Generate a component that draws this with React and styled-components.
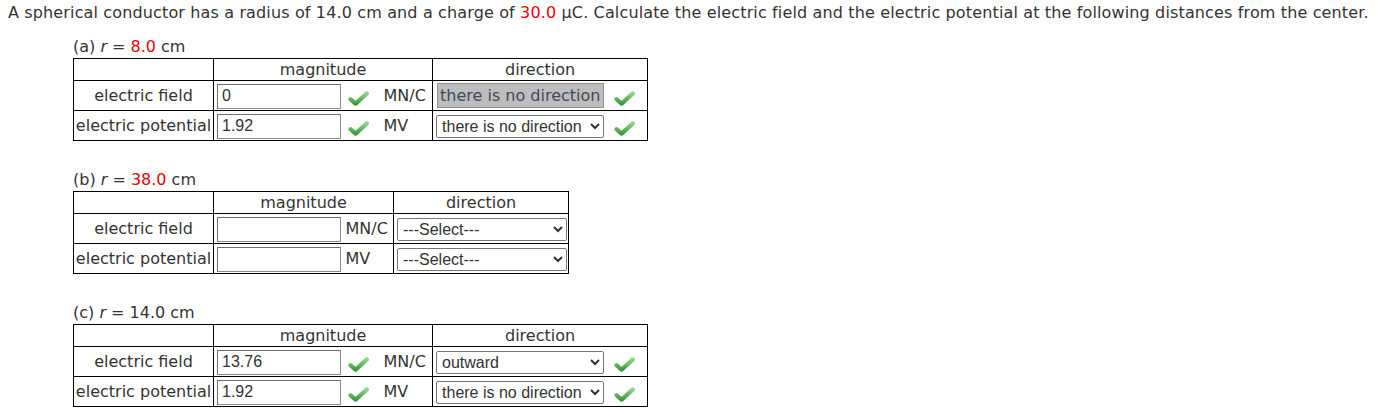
import React from 'react';
import styled, { createGlobalStyle } from 'styled-components';

const GlobalStyle = createGlobalStyle`
  html, body {
    margin: 0;
    padding: 0;
    background: #fff;
  }
  body {
    font-family: "DejaVu Sans", Verdana, sans-serif;
    font-size: 16px;
    color: #333;
  }
`;

const Page = styled.div`
  padding: 3px 8px 0 8px;
`;

const Intro = styled.p`
  margin: 0;
  line-height: 20px;
  white-space: nowrap;
  letter-spacing: 0.14px;
`;

const Red = styled.span`
  color: #e00;
`;

const Section = styled.section`
  margin: ${p => (p.$first ? '14px' : '29px')} 0 0 65px;
`;

const PartLabel = styled.div`
  line-height: 20px;
  height: 20px;
  margin-bottom: 1px;
`;

const Var = styled.i`
  font-style: italic;
`;

const Grid = styled.table`
  border-collapse: collapse;
  table-layout: fixed;
  width: ${p => p.$width}px;
  border: 1px solid #000;
`;

const Cell = styled.td`
  padding: 0;
  border-top: 1px solid #000;
  border-bottom: 1px solid #000;
  border-left: ${p => (p.$edge ? '1px solid #000' : 'none')};
  text-align: ${p => p.$align || 'left'};
  vertical-align: middle;
  white-space: nowrap;
  height: ${p => (p.$head ? 21 : 29)}px;
  line-height: 18px;
`;

const HeadRow = styled.tr`
  height: 22px;
`;

const BodyRow = styled.tr`
  height: 30px;
`;

const FieldInput = styled.input`
  box-sizing: border-box;
  width: 124px;
  height: 25px;
  margin: 1px 0 0 3px;
  padding: 0 4px;
  border: 1px solid #8a8a8a;
  border-left-color: #6f6f6f;
  border-top-color: #6f6f6f;
  font-family: "Liberation Sans", Arial, sans-serif;
  font-size: 16px;
  color: #333;
  background: #fff;
  display: block;
`;

const Unit = styled.span`
  display: block;
  padding-left: 3px;
`;

const Picker = styled.select`
  box-sizing: border-box;
  width: ${p => p.$width}px;
  height: 23px;
  margin: 1px 0 0 3px;
  font-family: "Liberation Sans", Arial, sans-serif;
  font-size: 16px;
  color: #333;
  border: 1px solid #767676;
  border-radius: 2px;
  background: #fff;
  display: block;
  padding: 0 1px;
`;

const Locked = styled.span`
  box-sizing: border-box;
  display: block;
  width: 167px;
  height: 25px;
  margin: 0 0 0 4px;
  padding: 0 2px;
  line-height: 23px;
  background: #bdbdbd;
  border: 1px solid #8f8f8f;
  color: #3d4a5c;
  white-space: nowrap;
  overflow: hidden;
`;

const CheckWrap = styled.span`
  display: flex;
  justify-content: center;
  padding: 5px 4px 0 0;
`;

const Check = () => (
  <CheckWrap>
    <svg width="21" height="15" viewBox="0 0 21 15">
      <defs>
        <linearGradient id="chk" x1="0" y1="0" x2="0" y2="1">
          <stop offset="0" stopColor="#8fd48f" />
          <stop offset="1" stopColor="#3c9a3c" />
        </linearGradient>
      </defs>
      <path
        d="M2.5 8.2 L7.6 12.6 L18.8 2.4"
        fill="none"
        stroke="url(#chk)"
        strokeWidth="4.2"
        strokeLinecap="round"
        strokeLinejoin="round"
      />
    </svg>
  </CheckWrap>
);

const options = ['---Select---', 'outward', 'inward', 'there is no direction'];

const Row = ({ label, value, unit, dir, checked, locked }) => (
  <BodyRow>
    <Cell $align="center">{label}</Cell>
    <Cell $edge>
      <FieldInput defaultValue={value} />
    </Cell>
    {checked && <Cell>{<Check />}</Cell>}
    <Cell>
      <Unit>{unit}</Unit>
    </Cell>
    <Cell $edge>
      {locked ? (
        <Locked>{dir}</Locked>
      ) : (
        <Picker $width={checked ? 168 : 170} defaultValue={dir}>
          {options.map(o => (
            <option key={o}>{o}</option>
          ))}
        </Picker>
      )}
    </Cell>
    {checked && (
      <Cell>
        <Check />
      </Cell>
    )}
  </BodyRow>
);

const PartTable = ({ checked, rows }) => (
  <Grid $width={checked ? 574 : 495}>
    <colgroup>
      {checked
        ? [140, 127, 40, 52, 173, 42].map((w, i) => <col key={i} style={{ width: w }} />)
        : [140, 129, 51, 175].map((w, i) => <col key={i} style={{ width: w }} />)}
    </colgroup>
    <tbody>
      <HeadRow>
        <Cell $head />
        <Cell $head $edge $align="center" colSpan={checked ? 3 : 2}>
          magnitude
        </Cell>
        <Cell $head $edge $align="center" colSpan={checked ? 2 : 1}>
          direction
        </Cell>
      </HeadRow>
      {rows.map(r => (
        <Row key={r.label} checked={checked} {...r} />
      ))}
    </tbody>
  </Grid>
);

export default function App() {
  return (
    <Page>
      <GlobalStyle />
      <Intro>
        A spherical conductor has a radius of 14.0 cm and a charge of <Red>30.0</Red> μC. Calculate the
        electric field and the electric potential at the following distances from the center.
      </Intro>

      <Section $first>
        <PartLabel>
          (a) <Var>r</Var> = <Red>8.0</Red> cm
        </PartLabel>
        <PartTable
          checked
          rows={[
            { label: 'electric field', value: '0', unit: 'MN/C', dir: 'there is no direction', locked: true },
            { label: 'electric potential', value: '1.92', unit: 'MV', dir: 'there is no direction' },
          ]}
        />
      </Section>

      <Section>
        <PartLabel>
          (b) <Var>r</Var> = <Red>38.0</Red> cm
        </PartLabel>
        <PartTable
          rows={[
            { label: 'electric field', value: '', unit: 'MN/C', dir: '---Select---' },
            { label: 'electric potential', value: '', unit: 'MV', dir: '---Select---' },
          ]}
        />
      </Section>

      <Section>
        <PartLabel>
          (c) <Var>r</Var> = 14.0 cm
        </PartLabel>
        <PartTable
          checked
          rows={[
            { label: 'electric field', value: '13.76', unit: 'MN/C', dir: 'outward' },
            { label: 'electric potential', value: '1.92', unit: 'MV', dir: 'there is no direction' },
          ]}
        />
      </Section>
    </Page>
  );
}
